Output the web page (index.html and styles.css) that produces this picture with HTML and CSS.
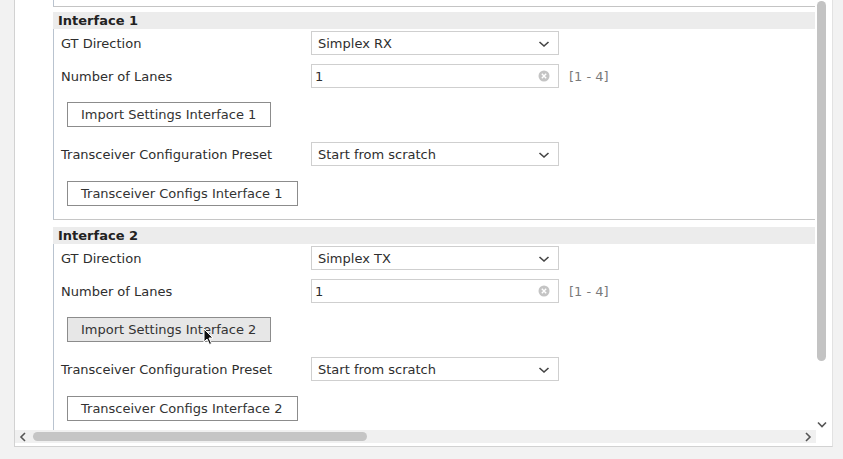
FILE: index.html
```html
<!DOCTYPE html>
<html>
<head>
<meta charset="utf-8">
<link rel="stylesheet" href="styles.css">
</head>
<body>
<div class="window">
  <div class="viewport">
    <div class="content">
      <div class="prev-box"></div>

      <section class="group">
        <div class="group-title">Interface 1</div>
        <div class="group-box">
          <div class="row">
            <span class="label">GT Direction</span>
            <div class="combo"><span>Simplex RX</span><svg class="chev" width="12" height="8" viewBox="0 0 12 8"><path d="M1.5 2 L6 6 L10.5 2" fill="none" stroke="#444" stroke-width="1.6"/></svg></div>
          </div>
          <div class="row gap-row">
            <span class="label">Number of Lanes</span>
            <div class="combo input"><span>1</span><svg class="clear" width="12" height="12" viewBox="0 0 12 12"><circle cx="6" cy="6" r="5.5" fill="#c4c4c4"/><path d="M3.8 3.8 L8.2 8.2 M8.2 3.8 L3.8 8.2" stroke="#fff" stroke-width="1.4"/></svg></div>
            <span class="range">[1 - 4]</span>
          </div>
          <button class="btn btn-first">Import Settings Interface 1</button>
          <div class="row after-btn">
            <span class="label">Transceiver Configuration Preset</span>
            <div class="combo"><span>Start from scratch</span><svg class="chev" width="12" height="8" viewBox="0 0 12 8"><path d="M1.5 2 L6 6 L10.5 2" fill="none" stroke="#444" stroke-width="1.6"/></svg></div>
          </div>
          <button class="btn btn-last">Transceiver Configs Interface 1</button>
        </div>
      </section>

      <section class="group group-next">
        <div class="group-title">Interface 2</div>
        <div class="group-box">
          <div class="row">
            <span class="label">GT Direction</span>
            <div class="combo"><span>Simplex TX</span><svg class="chev" width="12" height="8" viewBox="0 0 12 8"><path d="M1.5 2 L6 6 L10.5 2" fill="none" stroke="#444" stroke-width="1.6"/></svg></div>
          </div>
          <div class="row gap-row">
            <span class="label">Number of Lanes</span>
            <div class="combo input"><span>1</span><svg class="clear" width="12" height="12" viewBox="0 0 12 12"><circle cx="6" cy="6" r="5.5" fill="#c4c4c4"/><path d="M3.8 3.8 L8.2 8.2 M8.2 3.8 L3.8 8.2" stroke="#fff" stroke-width="1.4"/></svg></div>
            <span class="range">[1 - 4]</span>
          </div>
          <button class="btn btn-first btn-hover">Import Settings Interface 2</button>
          <div class="row after-btn">
            <span class="label">Transceiver Configuration Preset</span>
            <div class="combo"><span>Start from scratch</span><svg class="chev" width="12" height="8" viewBox="0 0 12 8"><path d="M1.5 2 L6 6 L10.5 2" fill="none" stroke="#444" stroke-width="1.6"/></svg></div>
          </div>
          <button class="btn btn-last">Transceiver Configs Interface 2</button>
        </div>
      </section>
    </div>

    <div class="vscroll">
      <div class="vthumb"></div>
      <svg class="vdown" width="10" height="7" viewBox="0 0 10 7"><path d="M1 1.5 L5 5.5 L9 1.5" fill="none" stroke="#555" stroke-width="1.6"/></svg>
    </div>
  </div>

  <div class="hscroll">
    <div class="harrow"><svg width="8" height="10" viewBox="0 0 8 10"><path d="M6 1 L2 5 L6 9" fill="none" stroke="#555" stroke-width="1.6"/></svg></div>
    <div class="htrack"><div class="hthumb"></div></div>
    <div class="harrow"><svg width="8" height="10" viewBox="0 0 8 10"><path d="M2 1 L6 5 L2 9" fill="none" stroke="#555" stroke-width="1.6"/></svg></div>
    <div class="corner"></div>
  </div>
</div>

<svg class="cursor" width="12" height="18" viewBox="0 0 12 18"><path d="M1 1 L1 14 L4 11 L6.5 16.5 L8.5 15.5 L6 10 L10 10 Z" fill="#111" stroke="#fff" stroke-width="1"/></svg>
</body>
</html>
```

FILE: styles.css
```css
html, body {
  margin: 0;
  padding: 0;
}

body {
  background: #f2f2f2;
  font-family: "DejaVu Sans", "Liberation Sans", sans-serif;
  font-size: 13px;
  color: #2e2e2e;
  width: 843px;
  height: 459px;
  overflow: hidden;
  position: relative;
}

.window {
  margin-left: 14px;
  width: 819px;
  height: 447px;
  box-sizing: border-box;
  background: #fff;
  border-left: 1px solid #d2d2d2;
  border-right: 1px solid #e2e2e2;
  border-bottom: 1px solid #d2d2d2;
  display: flex;
  flex-direction: column;
}

.viewport {
  height: 430px;
  display: grid;
  grid-template-columns: 800px 1fr;
  overflow: hidden;
}

.content {
  padding-left: 38px;
  overflow: hidden;
}

.prev-box {
  height: 6px;
  border-left: 1px solid #b9c3cf;
  border-bottom: 1px solid #c4c4c4;
}

.group {
  margin-top: 5px;
}

.group-next {
  margin-top: 7px;
}

.group-title {
  height: 17px;
  line-height: 17px;
  background: #ececec;
  font-weight: bold;
  padding-left: 5px;
  color: #222;
}

.group-box {
  border-left: 1px solid #b9c3cf;
  border-bottom: 1px solid #c6c6c6;
  padding: 2px 0 13px 7px;
  display: flex;
  flex-direction: column;
  align-items: flex-start;
}

.row {
  display: flex;
  align-items: center;
  height: 24px;
}

.gap-row {
  margin-top: 9px;
}

.after-btn {
  margin-top: 15px;
}

.label {
  width: 250px;
  flex: none;
}

.combo {
  width: 248px;
  height: 24px;
  box-sizing: border-box;
  border: 1px solid #cfcfcf;
  background: #fff;
  display: flex;
  align-items: center;
  justify-content: space-between;
  padding: 0 8px 0 6px;
}

.input {
  padding-left: 3px;
}

.chev {
  display: block;
  margin-top: 1px;
}

.clear {
  display: block;
}

.range {
  margin-left: 10px;
  color: #7a7a7a;
}

.btn {
  font-family: inherit;
  font-size: 13px;
  color: #333;
  background: #fff;
  border: 1px solid #8c8c8c;
  border-radius: 0;
  height: 25px;
  padding: 0 14px 0 13px;
  margin-left: 6px;
}

.btn-first {
  margin-top: 14px;
}

.btn-last {
  margin-top: 15px;
}

.btn-hover {
  background: #e7e7e7;
}

.vscroll {
  position: relative;
  display: flex;
  flex-direction: column;
  align-items: center;
}

.vthumb {
  width: 9px;
  height: 360px;
  margin-top: 1px;
  margin-left: -4px;
  border-radius: 5px;
  background: #c3c3c3;
}

.vdown {
  display: block;
  margin-top: auto;
  margin-left: -3px;
  margin-bottom: 2px;
}

.hscroll {
  height: 13px;
  display: flex;
  align-items: center;
  background: #f0f0f0;
}

.harrow {
  width: 16px;
  height: 13px;
  display: flex;
  align-items: center;
  justify-content: center;
}

.harrow svg {
  display: block;
}

.htrack {
  flex: 1;
  height: 13px;
  display: flex;
  align-items: center;
}

.hthumb {
  margin-left: 2px;
  width: 334px;
  height: 9px;
  border-radius: 5px;
  background: #c5c5c5;
}

.corner {
  width: 16px;
  height: 13px;
  background: #fff;
}

.cursor {
  position: absolute;
  left: 203px;
  top: 328px;
}
```
